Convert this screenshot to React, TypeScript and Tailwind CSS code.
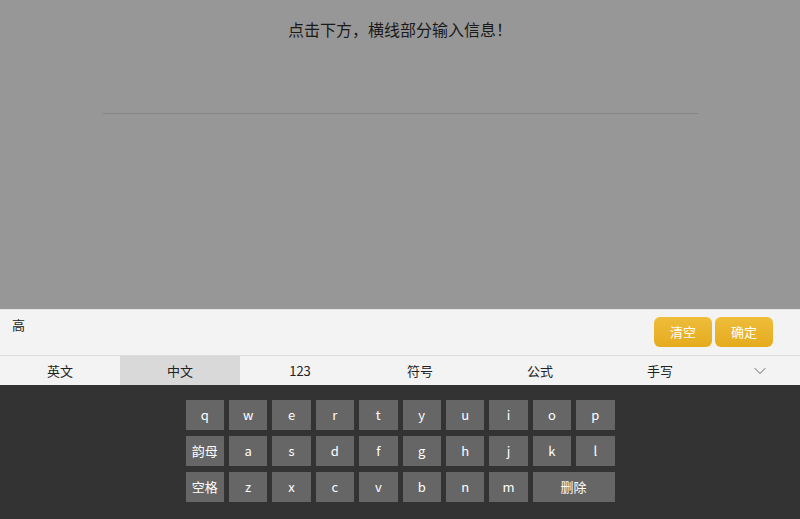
import { ChevronDown } from "lucide-react";

const row1 = ["q", "w", "e", "r", "t", "y", "u", "i", "o", "p"];
const row2 = ["韵母", "a", "s", "d", "f", "g", "h", "j", "k", "l"];
const row3 = ["空格", "z", "x", "c", "v", "b", "n", "m"];
const tabs = ["英文", "中文", "123", "符号", "公式", "手写"];

function Key({ label, wide }: { label: string; wide?: boolean }) {
  return (
    <div
      className={`flex h-[30px] items-center justify-center bg-[#666666] text-[13px] text-white ${wide ? "col-span-2" : ""}`}
    >
      {label}
    </div>
  );
}

export default function App() {
  return (
    <div className="flex h-[519px] w-[800px] flex-col overflow-hidden font-['Noto_Sans_CJK_SC',sans-serif] text-[#222]">
      {/* prompt area */}
      <div className="flex h-[309px] flex-col items-center bg-[#979797]">
        <p className="mt-[18px] text-[16px] leading-[22px] text-[#1a1a1a]">点击下方，横线部分输入信息！</p>
        <div className="mt-[73px] h-0 w-[595px] border-b border-[#858585]" />
      </div>

      {/* input bar */}
      <div className="flex h-[46px] items-start justify-between border-t border-[#e6e6e6] bg-[#f3f3f3] pr-[27px]">
        <span className="ml-[12px] mt-[6px] text-[13px] leading-[18px]">高</span>
        <div className="mt-[7px] flex gap-[3px]">
          <button className="h-[30px] w-[58px] rounded-[6px] bg-gradient-to-b from-[#eebd3a] to-[#e5ab1c] text-[13px] text-white">
            清空
          </button>
          <button className="h-[30px] w-[58px] rounded-[6px] bg-gradient-to-b from-[#eebd3a] to-[#e5ab1c] text-[13px] text-white">
            确定
          </button>
        </div>
      </div>

      {/* tab bar */}
      <div className="flex h-[30px] border-t border-[#dddddd] bg-[#f3f3f3] text-[13px]">
        {tabs.map((t) => (
          <div
            key={t}
            className={`flex w-[120px] items-center justify-center ${t === "中文" ? "bg-[#d9d9d9]" : ""}`}
          >
            {t}
          </div>
        ))}
        <div className="flex flex-1 items-center justify-center">
          <ChevronDown className="h-[20px] w-[20px] text-[#555]" strokeWidth={1.1} />
        </div>
      </div>

      {/* keyboard */}
      <div className="flex flex-1 justify-center bg-[#333333] pt-[15px]">
        <div className="grid h-fit w-[429px] grid-cols-10 gap-x-[5px] gap-y-[6px]">
          {row1.map((k) => (
            <Key key={k} label={k} />
          ))}
          {row2.map((k) => (
            <Key key={k} label={k} />
          ))}
          {row3.map((k) => (
            <Key key={k} label={k} />
          ))}
          <Key label="删除" wide />
        </div>
      </div>
    </div>
  );
}
